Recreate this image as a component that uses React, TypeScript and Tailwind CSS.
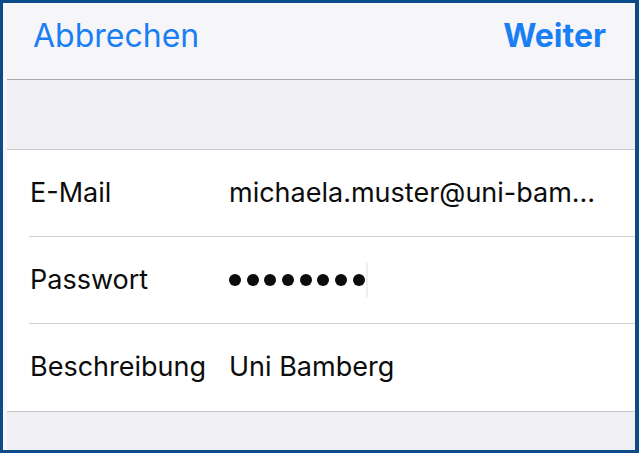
import React from "react";

type RowProps = {
  label: string;
  value: React.ReactNode;
  last?: boolean;
};

const Row = ({ label, value, last }: RowProps) => (
  <div className="pl-[22px]">
    <div
      className={`flex h-[87px] items-center ${
        last ? "" : "border-b border-[#cfcfd3]"
      }`}
    >
      <span className="w-[200px] shrink-0 pl-px text-[27px] text-[#0c0c0c]">
        {label}
      </span>
      <span className="min-w-0 flex-1 whitespace-nowrap text-[27px] text-[#0c0c0c]">
        {value}
      </span>
    </div>
  </div>
);

const App = () => {
  return (
    <div
      className="h-[453px] w-[639px] overflow-hidden border-t-[3px] border-r-[4px] border-b-[3px] border-l-[3px] border-[#0a4b88] bg-[#f7f7f9]"
      style={{ fontFamily: "Inter, 'Liberation Sans', sans-serif" }}
    >
      <div className="flex h-full flex-col pl-[4px]">
        <div className="flex h-[77px] items-center justify-between border-b border-[#a9a9ad] bg-[#f6f6f8] pr-[29px] pb-[10px] pl-[26px]">
          <button className="text-[32px] text-[#1a7ef5]">Abbrechen</button>
          <button className="text-[32px] font-bold text-[#1a7ef5]">
            Weiter
          </button>
        </div>
        <div className="h-[70px] border-b border-[#c8c8cc] bg-[#efeff4]" />
        <div className="border-b border-[#c8c8cc] bg-white">
          <Row label="E-Mail" value="michaela.muster@uni-bam…" />
          <Row
            label="Passwort"
            value={
              <span className="flex items-center">
                <span className="flex gap-[5.7px]">
                  {[0, 1, 2, 3, 4, 5, 6, 7].map((i) => (
                    <span
                      key={i}
                      className="h-[12px] w-[12px] rounded-full bg-[#0c0c0c]"
                    />
                  ))}
                </span>
                <span className="ml-[1px] h-[34px] w-[2px] bg-[#eceef5]" />
              </span>
            }
          />
          <Row label="Beschreibung" value="Uni Bamberg" last />
        </div>
        <div className="flex-1 bg-[#efeff4]" />
      </div>
    </div>
  );
};

export default App;
